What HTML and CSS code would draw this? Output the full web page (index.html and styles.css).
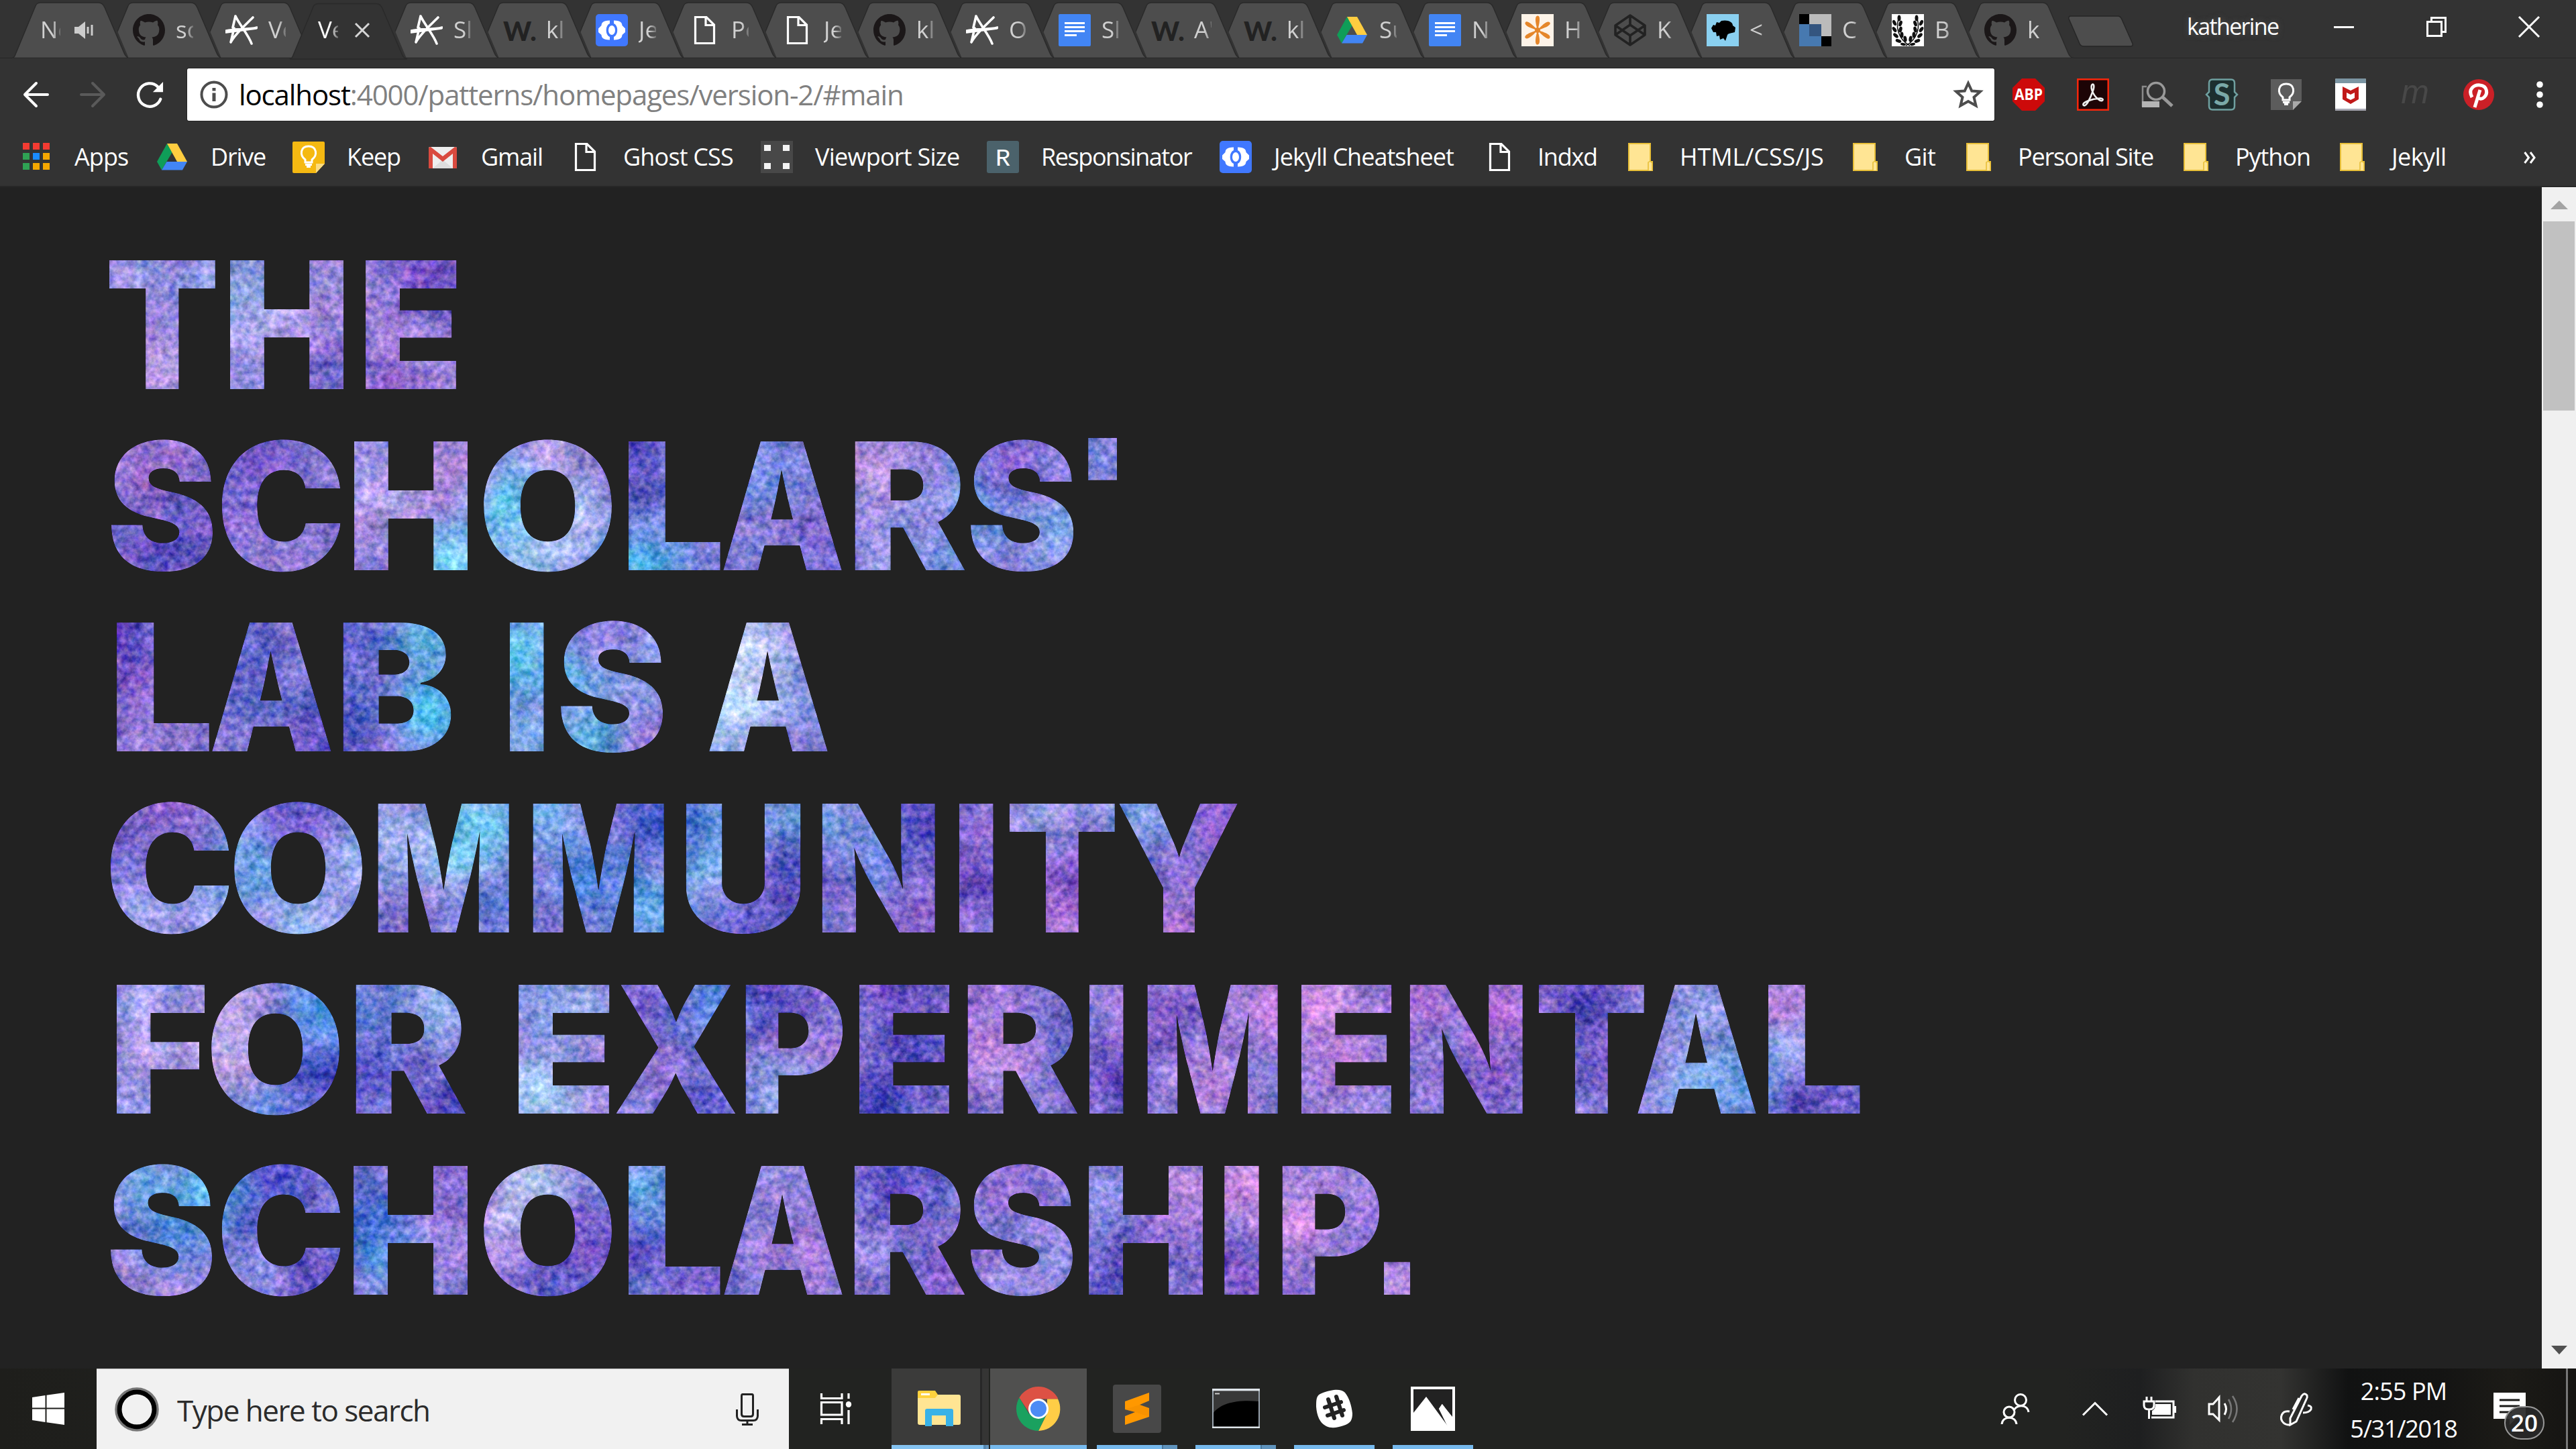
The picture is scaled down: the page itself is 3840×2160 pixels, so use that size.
FILE: index.html
```html
<!DOCTYPE html>
<html lang="en">
<head>
<meta charset="utf-8">
<title>Version 2</title>
<link rel="stylesheet" href="styles.css">
</head>
<body>
<svg class="defs" width="0" height="0" aria-hidden="true">
  <defs>
    <filter id="paper" x="0" y="0" width="100%" height="100%" color-interpolation-filters="sRGB">
      <feTurbulence type="fractalNoise" baseFrequency="0.1" numOctaves="4" seed="7" result="fine"/>
      <feColorMatrix in="fine" values="1 0 0 0 0  .7 .3 0 0 0  .5 0 .5 0 0  0 0 0 0 1" result="fineRgb"/>
      <feTurbulence type="fractalNoise" baseFrequency="0.022" numOctaves="3" seed="3" result="wide"/>
      <feColorMatrix in="wide" values="1 0 0 0 0  .6 .4 0 0 0  .7 .3 0 0 0  0 0 0 0 1" result="wideRgb"/>
      <feComposite in="SourceGraphic" in2="fineRgb" operator="arithmetic" k2="1" k3=".62" k4="-.3" result="a"/>
      <feComposite in="a" in2="wideRgb" operator="arithmetic" k2="1" k3=".4" k4="-.19" result="b"/>
      <feComposite in="b" in2="SourceAlpha" operator="in"/>
    </filter>
    <symbol id="tab" viewBox="0 0 180 84"><path d="M1 83.5C4 83 5 81 6 78L35 8Q37 1 43 1H130Q136 1 139 8L168 76Q171 83 176 83.5Z"/></symbol>
    <symbol id="github" viewBox="0 0 16 16"><path fill="#1b1718" d="M8 0C3.58 0 0 3.58 0 8c0 3.54 2.29 6.53 5.47 7.59.4.07.55-.17.55-.38 0-.19-.01-.82-.01-1.49-2.01.37-2.53-.49-2.69-.94-.09-.23-.48-.94-.82-1.13-.28-.15-.68-.52-.01-.53.63-.01 1.08.58 1.23.82.72 1.21 1.87.87 2.33.66.07-.52.28-.87.51-1.07-1.78-.2-3.64-.89-3.64-3.95 0-.87.31-1.59.82-2.15-.08-.2-.36-1.02.08-2.12 0 0 .67-.21 2.2.82.64-.18 1.32-.27 2-.27s1.36.09 2 .27c1.53-1.04 2.2-.82 2.2-.82.44 1.1.16 1.92.08 2.12.51.56.82 1.27.82 2.15 0 3.07-1.87 3.75-3.65 3.95.29.25.54.73.54 1.48 0 1.07-.01 1.93-.01 2.2 0 .21.15.46.55.38A8.01 8.01 0 0 0 16 8c0-4.42-3.58-8-8-8"/></symbol>
    <symbol id="star6" viewBox="0 0 48 48"><path fill="none" stroke="#fff" stroke-width="3.6" stroke-linecap="round" stroke-linejoin="round" d="M15 3L11 20M15 3C20 14 35 32 39 44M41 5C30 16 14 30 8 42L13 21M1 25C15 21 34 24 47 20M1 27L46 21"/></symbol>
    <symbol id="braces" viewBox="0 0 48 48"><rect width="48" height="48" rx="5" fill="#4078ff"/><path fill="#fff" d="M21 9.5C10 10 9 13 8.500 17L4 21.500V27L8.500 31C9 35 10 38 21 38.500V34C14 31 14 17 21 14zM27 9.500C38 10 39 13 39.500 17L44 21.500V27L39.500 31C39 35 38 38 27 38.500V34C34 31 34 17 27 14z"/><ellipse cx="24" cy="24" rx="5" ry="7" fill="#fff"/></symbol>
    <symbol id="page" viewBox="0 0 48 48"><path fill="none" stroke="#fff" stroke-width="3.200" d="M10.500 4.500H27L38.500 16V43.500H10.500zM26 4.500V16.500H38.500"/></symbol>
    <symbol id="docs" viewBox="0 0 48 48"><rect width="48" height="48" rx="2" fill="#4285f4"/><path stroke="#fff" stroke-width="3.200" d="M9 13.500H39M9 19.500H39M9 25.500H39M9 31.500H27"/></symbol>
    <symbol id="drive" viewBox="0 0 48 48"><path fill="#0f9d58" d="M16 4L1 31L8 43.500L24 16.500z"/><path fill="#ffcd40" d="M16 4H31L46 31H31z"/><path fill="#4285f4" d="M8 43.500L15.500 31H46L39 43.500z"/></symbol>
    <symbol id="folder" viewBox="0 0 48 48"><path fill="#ffe594" stroke="#e8bf38" stroke-width="2" d="M5 4H37V31H40V44H5z"/><path fill="#ffe594" stroke="#e8bf38" stroke-width="1.600" d="M34 44V32Q37 29 40 33V44"/></symbol>
    <symbol id="bulb" viewBox="0 0 48 48"><path fill="none" stroke-width="3" d="M19 32V28C10 21 12 8 24 8S38 21 29 28V32z"/><path stroke-width="3" d="M19 35.500H29M21 38.500H27"/></symbol>
  </defs>
</svg>

<header class="chrome">
  <div class="strip">
    <div class="tabs">
      <div class="tab noicon"><svg class="shape"><use href="#tab"/></svg><span class="t">Ne</span>
        <svg class="speaker" viewBox="0 0 30 28"><path fill="#ccc" d="M0 9H6L16 1V27L6 19H0zM18.500 9H21.500V19H18.500zM24.500 6H27.500V22H24.500z"/></svg></div>
      <div class="tab"><svg class="shape"><use href="#tab"/></svg><svg class="ico"><use href="#github"/></svg><span class="t">sc</span></div>
      <div class="tab"><svg class="shape"><use href="#tab"/></svg><svg class="ico"><use href="#star6"/></svg><span class="t">Ve</span></div>
      <div class="tab noicon active"><svg class="shape"><use href="#tab"/></svg><span class="t">Ve</span>
        <svg class="close" viewBox="0 0 22 22"><path stroke="#d6d6d6" stroke-width="3" d="M1 1L21 21M21 1L1 21"/></svg></div>
      <div class="tab"><svg class="shape"><use href="#tab"/></svg><svg class="ico"><use href="#star6"/></svg><span class="t">Sl</span></div>
      <div class="tab"><svg class="shape"><use href="#tab"/></svg><span class="ico w">W.</span><span class="t">kl</span></div>
      <div class="tab"><svg class="shape"><use href="#tab"/></svg><svg class="ico"><use href="#braces"/></svg><span class="t">Je</span></div>
      <div class="tab"><svg class="shape"><use href="#tab"/></svg><svg class="ico"><use href="#page"/></svg><span class="t">Pe</span></div>
      <div class="tab"><svg class="shape"><use href="#tab"/></svg><svg class="ico"><use href="#page"/></svg><span class="t">Je</span></div>
      <div class="tab"><svg class="shape"><use href="#tab"/></svg><svg class="ico"><use href="#github"/></svg><span class="t">kl</span></div>
      <div class="tab"><svg class="shape"><use href="#tab"/></svg><svg class="ico"><use href="#star6"/></svg><span class="t">O</span></div>
      <div class="tab"><svg class="shape"><use href="#tab"/></svg><svg class="ico"><use href="#docs"/></svg><span class="t">Sl</span></div>
      <div class="tab"><svg class="shape"><use href="#tab"/></svg><span class="ico w">W.</span><span class="t">A'</span></div>
      <div class="tab"><svg class="shape"><use href="#tab"/></svg><span class="ico w">W.</span><span class="t">kl</span></div>
      <div class="tab"><svg class="shape"><use href="#tab"/></svg><svg class="ico"><use href="#drive"/></svg><span class="t">Su</span></div>
      <div class="tab"><svg class="shape"><use href="#tab"/></svg><svg class="ico"><use href="#docs"/></svg><span class="t">N</span></div>
      <div class="tab"><svg class="shape"><use href="#tab"/></svg><svg class="ico" viewBox="0 0 48 48"><rect width="48" height="48" fill="#fdf3e8"/><g fill="#e5862a"><path id="petal" d="M24 24C21 14 19 3 24 2.500S27 14 24 24"/><use href="#petal" transform="rotate(58 24 24)"/><use href="#petal" transform="rotate(122 24 24)"/><use href="#petal" transform="rotate(180 24 24)"/><use href="#petal" transform="rotate(238 24 24)"/><use href="#petal" transform="rotate(302 24 24)"/><circle cx="24" cy="24" r="4"/></g></svg><span class="t">H</span></div>
      <div class="tab"><svg class="shape"><use href="#tab"/></svg><svg class="ico" viewBox="0 0 48 48"><path fill="none" stroke="#222" stroke-width="3.600" stroke-linejoin="round" d="M24 2L46 17V31L24 46L2 31V17zM24 2V16M24 32V46M2 17L24 32L46 17M2 31L24 16L46 31"/></svg><span class="t">K</span></div>
      <div class="tab"><svg class="shape"><use href="#tab"/></svg><svg class="ico" viewBox="0 0 48 48"><rect width="48" height="48" fill="#8ad0f0"/><path d="M7 21L10 16L13 17L15 12L19 13L22 10C32 8 39 12 39 17L43 20L42 27C36 29 33 28 31 31L28 40L25 36L20 38L19 32L15 33L14 27L10 27z"/></svg><span class="t">&lt;</span></div>
      <div class="tab"><svg class="shape"><use href="#tab"/></svg><svg class="ico" viewBox="0 0 48 48"><path d="M0 0H48V48H0z"/><path fill="#bbb" d="M15 0H48V33H15z"/><path fill="#4779b0" d="M0 15H33V48H0z"/><path fill="#34557f" d="M15 15H33V33H15z"/></svg><span class="t">C</span></div>
      <div class="tab"><svg class="shape"><use href="#tab"/></svg><svg class="ico" viewBox="0 0 48 48"><rect width="48" height="48" fill="#fff"/><g id="branch"><path fill="none" stroke="#111" stroke-width="1.500" d="M12 3C4 18 10 38 27 47"/><g fill="#111"><ellipse cx="11" cy="6" rx="2.500" ry="4.500"/><ellipse cx="4" cy="13" rx="2.500" ry="4.500" transform="rotate(-25 4 13)"/><ellipse cx="13" cy="14" rx="2.500" ry="4.500" transform="rotate(20 13 14)"/><ellipse cx="4" cy="23" rx="2.500" ry="4.500" transform="rotate(-35 4 23)"/><ellipse cx="13" cy="23" rx="2.500" ry="4.500" transform="rotate(15 13 23)"/><ellipse cx="6" cy="32" rx="2.500" ry="4.500" transform="rotate(-50 6 32)"/><ellipse cx="15" cy="31" rx="2.500" ry="4.500"/><ellipse cx="10" cy="40" rx="2.500" ry="4.500" transform="rotate(-70 10 40)"/><ellipse cx="20" cy="37" rx="2.500" ry="4.500" transform="rotate(-10 20 37)"/><ellipse cx="17" cy="45" rx="2" ry="4" transform="rotate(-80 17 45)"/></g></g><use href="#branch" transform="matrix(-1 0 0 1 48 0)"/></svg><span class="t">B</span></div>
      <div class="tab"><svg class="shape"><use href="#tab"/></svg><svg class="ico"><use href="#github"/></svg><span class="t">k</span></div>
    </div>
    <svg class="newtab" viewBox="0 0 100 50"><path fill="#4d4d4d" stroke="#262626" stroke-width="1.500" d="M5 2H75Q79 2 81 7L97 43Q98 47 94 47H24Q20 47 18 43L2 6Q1 2 5 2z"/></svg>
    <span class="user"><b class="fit" data-fit="135">katherine</b></span>
    <div class="wincontrols">
      <svg viewBox="0 0 32 32"><path stroke="#fff" stroke-width="3" d="M1 16.500H31"/></svg>
      <svg viewBox="0 0 32 32"><path fill="none" stroke="#fff" stroke-width="3" d="M2.500 8.500H23.500V29.500H2.500zM8.500 8V2.500H29.500V23.500H24"/></svg>
      <svg viewBox="0 0 32 32"><path stroke="#fff" stroke-width="3" d="M1 1L31 31M31 1L1 31"/></svg>
    </div>
  </div>

  <div class="toolbar">
    <svg class="nav" viewBox="0 0 40 40"><path fill="none" stroke="#fff" stroke-width="4" stroke-linecap="round" stroke-linejoin="round" d="M20 3L3 20L20 37M3 20H37"/></svg>
    <svg class="nav" viewBox="0 0 40 40"><path fill="none" stroke="#5a5a5a" stroke-width="4" stroke-linecap="round" stroke-linejoin="round" d="M20 3L37 20L20 37M37 20H3"/></svg>
    <svg class="nav reload" viewBox="0 0 44 44"><path fill="none" stroke="#fff" stroke-width="4.500" stroke-linecap="round" d="M38 29A18 18 0 1 1 33.500 9.500"/><path fill="#fff" d="M42 2V18H26z"/></svg>
    <div class="omnibox">
      <svg class="info" viewBox="0 0 42 42"><circle cx="21" cy="21" r="18.500" fill="none" stroke="#4d4d4d" stroke-width="4"/><path fill="#4d4d4d" d="M18.500 11H23.500V15.500H18.500zM18.500 18.500H23.500V31H18.500z"/></svg>
      <span class="url"><b class="fit" data-fit="986">localhost<i>:4000/patterns/homepages/version-2/#main</i></b></span>
      <svg class="fav" viewBox="0 0 46 46"><path fill="none" stroke="#4d4d4d" stroke-width="4" d="M23 6L28.300 17.500L41 18.500L31.500 27L34.500 39.500L23 33L11.500 39.500L14.500 27L5 18.500L17.700 17.500z"/></svg>
    </div>
    <div class="exts">
      <svg viewBox="0 0 48 48"><path fill="#cd0a0a" d="M14 0H34L48 14V34L34 48H14L0 34V14z"/><text x="24" y="32" text-anchor="middle" textLength="42" lengthAdjust="spacingAndGlyphs" class="abp">ABP</text></svg>
      <svg viewBox="0 0 48 48"><path fill="#1d0406" stroke="#f7270c" stroke-width="2.500" d="M1.300 1.300H46.700V46.700H1.300z"/><path fill="none" stroke="#eee" stroke-width="2.600" d="M10 40C6 36 22 30 35 29.500C42 30 38 36 32 31C26 27 20 16 22 10C24 6 27 10 24 18C21 27 14 43 10 40z"/></svg>
      <svg viewBox="0 0 48 48"><path fill="none" stroke="#8a8a8a" stroke-width="2.500" d="M8 12H2V42"/><path fill="#b5b5b5" d="M1 34H27V43H1z"/><circle cx="22" cy="19" r="12.500" fill="none" stroke="#999" stroke-width="3.500"/><path stroke="#999" stroke-width="5" d="M31 27L46 41"/></svg>
      <svg viewBox="0 0 48 48"><path fill="#1d2f2f" stroke="#6fa0a0" stroke-width="2.500" d="M10 1.500H38Q43 1.500 43 7V20L47 24L43 28V41Q43 46.500 38 46.500H10Q5 46.500 5 41V28L1 24L5 20V7Q5 1.500 10 1.500z"/><text x="24" y="40" text-anchor="middle" class="sty">S</text></svg>
      <svg viewBox="0 0 48 48"><path fill="#5c5c5c" d="M1 1H47V33L34 47H1z"/><path fill="#aaa" d="M34 47V34H47z"/><use href="#bulb" stroke="#fff"/></svg>
      <svg viewBox="0 0 48 48"><rect x="1" width="46" height="48" rx="2" fill="#fff"/><path fill="#7b95a3" d="M1 2Q1 0 3 0H45Q47 0 47 2V7H1z"/><path fill="#a9a9b4" d="M1 45H47V48H1z"/><path fill="#c01818" d="M12 12L24 18L36 12V31L24 38L12 31z"/><path fill="#fff" d="M18 21L24 24L30 21V29L24 32L18 29z"/></svg>
      <svg viewBox="0 0 48 48"><text x="24" y="37" text-anchor="middle" class="em">m</text></svg>
      <svg viewBox="0 0 48 48"><circle cx="23" cy="24" r="23" fill="#cb2027"/><path fill="none" stroke="#fff" stroke-width="5" d="M13 28C6 15 17 9 25 10C36 11 37 23 31 28C27 32 22 30 22 27M25 17L17 43"/></svg>
    </div>
    <svg class="dots" viewBox="0 0 12 42"><g fill="#fff"><circle cx="6" cy="6" r="4.800"/><circle cx="6" cy="21" r="4.800"/><circle cx="6" cy="36" r="4.800"/></g></svg>
  </div>

  <nav class="bookmarks">
    <a><svg viewBox="0 0 48 48"><path fill="#f33b32" d="M4 3h10v10H4zM19 3h10v10H19zM34 3h10v10H34z"/><path fill="#2fa254" d="M4 18h10v10H4zM4 33h10v10H4z"/><path fill="#1a8cff" d="M19 18h10v10H19z"/><path fill="#f5a700" d="M34 18h10v10H34zM19 33h10v10H19zM34 33h10v10H34z"/></svg><b class="fit" data-fit="80">Apps</b></a>
    <a><svg><use href="#drive"/></svg><b class="fit" data-fit="79">Drive</b></a>
    <a><svg viewBox="0 0 48 48"><path fill="#f5b912" d="M2 1H46Q48 1 48 3V34L35 48H2Q0 48 0 46V3Q0 1 2 1"/><path fill="#fbdc82" d="M35 48V34H48z"/><use href="#bulb" stroke="#fff"/></svg><b class="fit" data-fit="77">Keep</b></a>
    <a><svg viewBox="0 0 48 48"><rect x="3" y="9" width="42" height="32" rx="2" fill="#eee"/><path fill="#ddd" d="M9 41L24 28L39 41z"/><path fill="#d94a3f" d="M3 41V11Q3 9 6 9L24 23L42 9Q45 9 45 11V41H39V19L24 31L9 19V41z"/></svg><b class="fit" data-fit="89">Gmail</b></a>
    <a><svg><use href="#page"/></svg><b class="fit" data-fit="162">Ghost CSS</b></a>
    <a><svg viewBox="0 0 48 48"><rect width="48" height="48" fill="#484848"/><path fill="#f4f4f4" d="M5 6h10v9H5zM33 6h10v9H33zM5 33h10v9H5zM33 33h10v9H33z"/></svg><b class="fit" data-fit="215">Viewport Size</b></a>
    <a><svg viewBox="0 0 48 48"><rect width="48" height="48" rx="3" fill="#4b626b"/><text x="24" y="37" text-anchor="middle" class="resp">R</text></svg><b class="fit" data-fit="223">Responsinator</b></a>
    <a><svg><use href="#braces"/></svg><b class="fit" data-fit="271">Jekyll Cheatsheet</b></a>
    <a><svg><use href="#page"/></svg><b class="fit" data-fit="84">Indxd</b></a>
    <a><svg><use href="#folder"/></svg><b class="fit" data-fit="211">HTML/CSS/JS</b></a>
    <a><svg><use href="#folder"/></svg><b class="fit" data-fit="44">Git</b></a>
    <a><svg><use href="#folder"/></svg><b class="fit" data-fit="199">Personal Site</b></a>
    <a><svg><use href="#folder"/></svg><b class="fit" data-fit="108">Python</b></a>
    <a><svg><use href="#folder"/></svg><b class="fit" data-fit="83">Jekyll</b></a>
    <svg class="more" viewBox="0 0 18 18"><path fill="none" stroke="#fff" stroke-width="3" d="M1.500 1L7.500 9L1.500 17M10 1L16 9L10 17"/></svg>
  </nav>
</header>

<main class="view">
  <h1 class="lead">
    <span data-ink="160-324 343-512 545-682">THE</span>
    <span data-ink="163-318 330-508 528-697 720-914 937-1076 1077-1257 1275-1439 1444-1601 1622-1665">SCHOLARS'</span>
    <span data-ink="174-314 315-496 512-676 - 760-812 833-989 - 1056-1236">LAB IS A</span>
    <span data-ink="164-342 348-542 564-762 795-993 1023-1197 1226-1397 1430-1482 1502-1665 1667-1848">COMMUNITY</span>
    <span data-ink="174-306 314-508 531-695 - 773-910 917-1097 1112-1259 1281-1417 1442-1606 1624-1676 1710-1907 1940-2076 2101-2272 2291-2454 2439-2619 2636-2775">FOR EXPERIMENTAL</span>
    <span data-ink="162-317 330-508 527-697 720-914 937-1076 1078-1258 1274-1439 1444-1600 1623-1793 1825-1878 1912-2059 2061-2103">SCHOLARSHIP.</span>
  </h1>
  <div class="scroll">
    <svg viewBox="0 0 26 14"><path fill="#a3a3a3" d="M13 0L26 13H0z"/></svg>
    <div class="thumb"></div>
    <svg viewBox="0 0 26 14"><path fill="#505050" d="M1 0H25L13 13z"/></svg>
  </div>
</main>

<footer class="taskbar">
  <div class="start"><svg viewBox="0 0 48 48"><path fill="#fff" d="M0 7L19.500 4V22.500H0zM21.500 3.700L48 0V22.500H21.500zM0 24.500H19.500V44L0 41zM21.500 24.500H48V48L21.500 44.300z"/></svg></div>
  <div class="search">
    <svg class="ring" viewBox="0 0 66 66"><circle cx="33" cy="33" r="31" fill="none" stroke="#777" stroke-width="3.500"/><circle cx="33" cy="33" r="26" fill="none" stroke="#000" stroke-width="7"/></svg>
    <span class="hint"><b class="fit" data-fit="375">Type here to search</b></span>
    <svg class="mic" viewBox="0 0 34 48"><path fill="none" stroke="#222" stroke-width="3" d="M10 1.500H24Q25.500 1.500 25.500 4V31Q25.500 34.500 22 34.500H12Q8.500 34.500 8.500 31V4Q8.500 1.500 10 1.500M1.500 24V34Q2 40.500 8 40.500H26Q32 40.500 32.500 34V24M17 41V47M9 46.500H25"/></svg>
  </div>
  <div class="apps">
    <div class="app view-btn"><svg viewBox="0 0 46 46"><path fill="none" stroke="#fff" stroke-width="3.200" d="M1.500 0V7.500H32V0M1.500 13.500H32V32H1.500zM1.500 46V38.500H32V46M42 0V8M42 25V46"/><ellipse cx="42" cy="16.500" rx="4.200" ry="4.500" fill="#fff"/></svg></div>
    <div class="app explorer"><svg viewBox="0 0 66 56"><path fill="#ffd23e" d="M1 3Q1 1 3 1H27L31 7V12H1z"/><path fill="#fff" d="M6 5H19V8H6z"/><path fill="#ffe593" d="M1 12H27L31 7H62Q65 7 65 10V49Q65 52 62 52H4Q1 52 1 49z"/><path fill="#39b2e7" d="M12 31Q12 28 15 28H51Q54 28 54 31V54H43V38H22V54H12z"/></svg></div>
    <div class="app current"><svg viewBox="0 0 66 66"><path fill="#dd5144" d="M4.400 16.500A33 33 0 0 1 61.600 16.500L62 18.500H33L20 40z"/><path fill="#ffcd46" d="M62 18.500A33 33 0 0 1 33 66L46 40L46 18.500z"/><path fill="#1aa15f" d="M4.400 16.500A33 33 0 0 0 33 66L45 41L33 33L19 41z"/><circle cx="33" cy="33" r="15" fill="#fff"/><circle cx="33" cy="33" r="12" fill="#4c8bf5"/></svg></div>
    <div class="app stacked"><svg class="tile" viewBox="0 0 72 72"><rect width="72" height="72" rx="4" fill="#484848"/><path fill="#ff9800" d="M18 25L54 12V24L40 30L54 35V48L18 60V47L33 41L18 37z"/><path fill="#e08000" d="M33 41L54 48L54 36L40 30L18 37z" opacity=".25"/></svg></div>
    <div class="app stacked"><svg class="tile" viewBox="0 0 72 72"><path d="M2 7H71V64H2z" stroke="#9aa4ae" stroke-width="2"/><path fill="#383838" d="M3 10H70V25C40 22 14 27 3 42z"/><path fill="#dfe5ea" d="M1 6H72V9.500H1zM1 62.500H72V65H1z"/><path stroke="#ccc" stroke-width="2" d="M5 13.500H12"/></svg></div>
    <div class="app"><svg class="tile" viewBox="0 0 72 72"><path fill="#fff" d="M30 9C39 7 47 7 52 12C58 19 62 32 63 43C63 53 60 58 50 61C41 64 32 66 24 62C14 57 10 46 9 33C9 22 9 16 17 13C21 11 25 10 30 9"/><path stroke="#232323" stroke-width="6" stroke-linecap="round" d="M27 22L36 50M39 18L48 46M22 34L46 26M26 46L50 38"/></svg></div>
    <div class="app"><svg viewBox="0 0 66 66"><path fill="#fff" d="M0 0H66V66H0z"/><path fill="#222" d="M4 4H62V46L47 26L42 33L56 60L23 15L4 39z"/><path fill="#fff" d="M42 33L46.500 26L62 45V62H56z"/></svg></div>
  </div>
  <div class="tray">
    <svg class="people" viewBox="0 0 44 48"><g fill="none" stroke="#fff" stroke-width="3"><circle cx="30" cy="11" r="8.500"/><circle cx="13" cy="29" r="8"/><path d="M20 27C22 18 40 16 42 29M2 47C3 34 23 34 24 47"/></g></svg>
    <svg class="up" viewBox="0 0 38 22"><path fill="none" stroke="#fff" stroke-width="3" d="M1 20.500L19 2.500L37 20.500"/></svg>
    <svg class="power" viewBox="0 0 50 36"><path fill="none" stroke="#fff" stroke-width="3" d="M18 8H45V32H12M5 1V8M12 1V8M1 8H16V14Q16 20 8.500 20T1 14zM8.500 20V34"/><path fill="#fff" d="M18 12H41V28H13V22Q18 20 18 12M46 15H49V25H46z"/></svg>
    <svg class="vol" viewBox="0 0 50 44"><path fill="none" stroke="#fff" stroke-width="3" d="M2 15H8L17 5V39L8 30H2zM25 14Q30 22 25 31"/><path fill="none" stroke="#777" stroke-width="2.600" d="M31 8Q39 22 31 37M37 3Q50 22 37 42"/></svg>
    <svg class="pen" viewBox="0 0 50 50"><path fill="none" stroke="#fff" stroke-width="3" d="M33 5Q37 -1 41 4Q42 7 40 10L25 43L16 48V38L33 5M29 8L20 25M15 28C3 26 -1 38 6 45Q9 48 15 48M42 19Q49 20 47 25Q44 30 35 30"/></svg>
    <div class="clock"><b class="fit" data-fit="125">2:55 PM</b><b class="fit" data-fit="157">5/31/2018</b></div>
    <div class="note"><svg viewBox="0 0 48 48"><path fill="#fff" d="M0 0H48V39H33L24 48V39H0z"/><path stroke="#1a1a18" stroke-width="3" d="M9 11H39M9 20H39M9 29H27"/></svg><span class="badge">20</span></div>
  </div>
</footer>
<script src="page.js"></script>
</body>
</html>
```
FILE: styles.css
```css
* { box-sizing: border-box; }
body {
  margin: 0;
  width: 3840px;
  height: 2160px;
  overflow: hidden;
  display: flex;
  flex-direction: column;
  background: #222;
  color: #fff;
  font: 36px/1 "Open Sans", "Noto Sans", sans-serif;
}
svg { display: block; flex: none; overflow: visible; }
b { font-weight: 400; white-space: pre; }
i { font-style: normal; }
.defs { position: absolute; }

.chrome {
  height: 279px;
  background: #333;
  border-bottom: 2px solid #272727;
  flex: none;
}
.strip {
  height: 87px;
  display: flex;
  padding-left: 17px;
  border-bottom: 1px solid #262626;
}
.tabs { display: flex; height: 86px; padding-top: 3px; }
.tab {
  position: relative;
  width: 138px;
  height: 84px;
  padding: 18px 0 0 43px;
  display: flex;
  flex: none;
  color: #d0d0d0;
}
.tab .shape {
  position: absolute;
  left: 0;
  top: 0;
  width: 180px;
  height: 84px;
  fill: #4d4d4d;
  stroke: #2a2a2a;
  stroke-width: 1.5;
}
.tab:nth-child(n+2) .shape { clip-path: polygon(19px 41px, 36px 0, 180px 0, 180px 84px, 37px 84px); }
.tab:nth-child(4) .shape { clip-path: none; }
.tab.active { z-index: 1; color: #fff; }
.tab.active .shape { fill: #333; height: 87px; }
.ico { position: relative; width: 48px; height: 48px; flex: none; margin-right: 16px; }
.w { color: #222; font: 900 40px/50px "Lato", sans-serif; }
.t {
  position: relative;
  width: 26px;
  flex: none;
  overflow: hidden;
  white-space: nowrap;
  font-size: 35px;
  line-height: 46px;
  -webkit-mask-image: linear-gradient(90deg, #000 60%, rgba(0, 0, 0, .25) 100%);
  mask-image: linear-gradient(90deg, #000 60%, rgba(0, 0, 0, .25) 100%);
}
.noicon .t { width: 30px; }
.speaker { position: relative; width: 30px; height: 28px; margin: 10px 0 0 21px; }
.close { position: relative; width: 22px; height: 22px; margin: 13px 0 0 25px; }
.newtab { width: 100px; height: 50px; margin: 22px 0 0 29px; }
.user { margin: 19px 0 0 78px; width: 135px; font-size: 34px; line-height: 40px; text-shadow: 0 0 8px #555; }
.wincontrols { display: flex; gap: 106px; margin: 24px 0 0 83px; }
.wincontrols svg { width: 32px; height: 32px; }

.toolbar { height: 108px; display: flex; align-items: center; padding: 0 0 0 34px; }
.nav { width: 40px; height: 40px; margin-right: 44px; margin-bottom: 1px; }
.reload { width: 42px; height: 42px; margin-right: 34px; margin-left: 1px; }
.omnibox {
  width: 2694px;
  height: 78px;
  background: #fff;
  border-radius: 2px;
  outline: 1px solid #232323;
  display: flex;
  align-items: center;
  padding: 0 16px 0 19px;
  color: #000;
}
.info { width: 42px; height: 42px; }
.url { flex: 1; font-size: 42px; padding-left: 16px; line-height: 56px; }
.url i { color: #808080; }
.fav { width: 46px; height: 46px; }
.exts { display: flex; gap: 48px; margin-left: 27px; }
.exts svg { width: 48px; height: 48px; }
.abp { font: 700 23px "Open Sans", sans-serif; fill: #fff; }
.sty { font: 700 45px "Lato", sans-serif; fill: #7aa9a8; }
.em { font: italic 50px "Liberation Sans", sans-serif; fill: #484848; }
.resp { font: 37px "Liberation Mono", monospace; fill: #fff; }
.dots { width: 12px; height: 42px; margin-left: 60px; }

.bookmarks {
  height: 78px;
  display: grid;
  align-items: center;
  padding-left: 30px;
  grid-template-columns: 203px 203px 200px 212px 286px 337px 347px 393px 212px 335px 169px 324px 233px 278px auto;
}
.bookmarks a { display: flex; align-items: center; gap: 33px; line-height: 50px; }
.bookmarks a svg { width: 48px; height: 48px; }
.bookmarks .more { width: 18px; height: 18px; margin-top: 2px; }

.view { height: 1761px; flex: none; display: flex; justify-content: space-between; background: #222; }
/* White letters on black, tinted by the wash, then lightened onto the page. */
.lead {
  position: relative;
  margin: 70px 0 0 152px;
  width: 2700px;
  height: 1630px;
  font: 900 264px/270px "Inter", sans-serif;
  background: #000;
  isolation: isolate;
  mix-blend-mode: lighten;
  white-space: nowrap;
  font-kerning: none;
}
.lead::after {
  content: "";
  position: absolute;
  inset: 0;
  background: var(--washes) #7f72cc;
  filter: url(#paper);
  mix-blend-mode: multiply;
}
.lead > span { display: block; white-space: pre; height: 270px; }
.lead span span { display: inline-block; transform-origin: 0 50%; }
.lead .mark { font: 700 258px/0 "DejaVu Sans", sans-serif; }
.lead .tick { font: 700 232px/0 "DejaVu Sans", sans-serif; vertical-align: 28px; }
.scroll {
  width: 51px;
  background: #f0f0f0;
  display: flex;
  flex-direction: column;
  align-items: center;
  padding: 20px 0;
}
.scroll svg { width: 26px; height: 14px; }
.thumb { width: 47px; height: 282px; margin: 17px 0 auto; background: #c1c1c1; }

.taskbar {
  height: 120px;
  flex: none;
  display: flex;
  background: linear-gradient(90deg, #1e1e1b 0, #222321 600px, #222321 3080px, #1e1f20 3190px, #31312f 3270px, #333331 3400px, #111212 3500px, #141413 3640px, #1c1b17 3740px, #151412 3840px);
}
.start { width: 144px; padding: 36px 48px; }
.start svg { width: 48px; height: 48px; }
.search {
  width: 1032px;
  background: #f1f1f1;
  border-top: 1px solid #bbb;
  color: #2b2b2b;
  display: flex;
  align-items: center;
  padding: 0 45px 0 27px;
}
.ring { width: 66px; height: 66px; }
.hint { flex: 1; padding-left: 27px; font-size: 44px; line-height: 58px; padding-top: 3px; }
.mic { width: 34px; height: 48px; }
.apps { display: flex; gap: 27px; }
.app {
  width: 120px;
  height: 120px;
  border-bottom: 6px solid #76b9ed;
  display: grid;
  place-items: center;
  padding-top: 6px;
}
.app svg { width: 66px; height: 66px; }
.app svg.tile { width: 72px; height: 72px; }
.view-btn { border: 0; width: 126px; padding: 0 0 0 14px; }
.view-btn svg { width: 46px; height: 46px; }
.explorer {
  width: 145px;
  padding-right: 3px;
  background: linear-gradient(90deg, #3b3b3a 132px, #272727 132px 135px, #353534 135px);
  border-image: linear-gradient(90deg, #85c3f1 132px, #5688b0 132px 135px, #6496bf 135px) 6;
}
.app.explorer { border-width: 0 0 6px; border-style: solid; }
.explorer svg { height: 56px; }
.current { width: 144px; margin-left: -25px; margin-right: -12px; background: #50504f; }
.stacked { border-image: linear-gradient(90deg, #76b9ed 93px, #4a769a 93px 95px, #5f93bd 95px) 6; }
.app.stacked { border-width: 0 0 6px; border-style: solid; }

.tray { display: flex; margin-left: auto; padding-top: 36px; }
.people { width: 44px; height: 48px; }
.up { width: 38px; height: 22px; margin: 13px 0 0 78px; }
.power { width: 50px; height: 36px; margin: 5px 0 0 53px; }
.vol { width: 50px; height: 44px; margin: 2px 0 0 46px; }
.pen { width: 50px; height: 50px; margin-left: 57px; }
.clock {
  width: 160px;
  margin: -30px 0 0 55px;
  display: flex;
  flex-direction: column;
  align-items: center;
  line-height: 56px;
}
.note { position: relative; width: 111px; margin-left: 54px; margin-top: -36px; margin-right: 12px; padding-top: 36px; border-right: 3px solid #777; }
.note svg { width: 48px; height: 48px; }
.badge {
  position: absolute;
  left: 16px;
  top: 56px;
  width: 60px;
  height: 50px;
  border: 2px solid #999;
  border-radius: 25px;
  background: rgba(40, 40, 40, .93);
  text-align: center;
  font-weight: 600;
  font-size: 35px;
  line-height: 45px;
}
```
FILE: page.js
```javascript
const pen = document.createElement('canvas').getContext('2d');
const measure = (el, text) => {
  const s = getComputedStyle(el);
  pen.font = `${s.fontWeight} ${s.fontSize} ${s.fontFamily}`;
  return pen.measureText(text);
};

// Track labels so the drawn letters span exactly data-fit pixels.
for (const el of document.querySelectorAll('.fit')) {
  const text = el.textContent;
  const m = measure(el, text);
  const ink = m.actualBoundingBoxLeft + m.actualBoundingBoxRight;
  el.style.letterSpacing = (el.dataset.fit - ink) / (text.length - 1) + 'px';
}

// Kern the headline: data-ink lists the left and right edge of each letter.
const lead = document.querySelector('.lead');
const special = { '.': 'mark', "'": 'tick' };
for (const line of lead.children) {
  const ink = line.dataset.ink.split(' ').map(p => p.split('-').map(Number));
  const chars = [...line.textContent];
  line.textContent = '';
  let x = 152;
  chars.forEach((c, i) => {
    const [left, right] = ink[i];
    if (!left) { line.append(c); x += measure(lead, c).width; return; }
    const el = document.createElement('span');
    el.className = special[c] || '';
    el.textContent = c;
    line.append(el);
    const m = measure(el, c);
    const scale = (right - left) / (m.actualBoundingBoxLeft + m.actualBoundingBoxRight);
    const start = left + m.actualBoundingBoxLeft * scale;
    el.style.transform = `scaleX(${scale.toFixed(3)})`;
    el.style.marginLeft = (start - x).toFixed(1) + 'px';
    x = start + m.width;
  });
}

// Watercolour washes behind the headline: x y colour.
const washes = `60 60 8f8ed8,95 200 b59ae0,200 80 7fa5dc,250 130 b4a0e4,350 90 a08ad8,200 220 8f8fe0,330 200 8068cc,480 60 6a48bc,440 150 a083d8,420 210 7e4fc0,500 225 9f84d8,
60 350 9a68c8,40 400 6a64c8,90 470 5a44b8,130 420 6a5cc0,230 330 6a50c0,200 400 7c60c8,260 490 8c78d0,400 340 9a90e0,520 350 b088d8,430 400 b8a0e0,520 490 70d0f0,600 400 60c8ec,680 330 b0a0e4,700 420 a8c0f0,640 480 a0c8f4,800 330 5048b8,810 400 6870cc,800 480 3cacdf,880 480 6878d0,990 350 6080d4,960 430 8c80d8,1080 480 6c60c8,1150 350 b494dc,1200 400 8c8cdc,1150 480 a0a8ec,1260 480 7090dc,1350 340 7a60cc,1300 400 60a0e0,1420 440 80a0e4,1480 330 7c80d8,
30 600 4c38b0,40 680 8060c8,60 750 9878d0,200 620 5058c0,230 680 5a64c4,330 750 5548b8,370 600 5058c0,480 600 60b0e0,370 720 5060c4,490 710 40b8e4,625 620 60c0e8,630 750 78a8e4,620 670 5080cc,740 590 8078d4,700 650 70b0e8,800 650 88a0e4,720 750 60b4e4,970 620 b8d0f4,950 690 c0d8f8,1040 700 8090dc,920 750 88b0ec,
100 860 8860c8,30 920 7468cc,60 1010 98a8ec,170 1020 88a0e4,290 860 6858c8,220 940 60a0e0,380 930 90a8e8,300 1030 90b8ec,430 900 a0b0ec,560 880 68c4ec,520 920 98d0f4,590 1010 5878d0,660 870 68a8e4,730 960 4480d8,830 870 4058c8,820 1010 58a0e0,880 870 5090d8,900 940 80b0ec,1030 960 5048b8,950 1030 5850c0,1030 870 70a0e0,1100 880 8090dc,1150 920 5070cc,1220 880 4840b4,1230 1010 8860c8,1300 880 8468cc,1300 960 6848bc,1400 860 98a0e4,1440 950 7850c0,1430 1000 a868c8,1540 870 80a0e4,1580 930 8068cc,1670 870 7850c0,1610 1030 a068c8,
60 1140 a0a0e8,80 1220 b0a0e4,40 1300 8890e0,190 1150 b4a4e4,190 1230 c0a8e4,320 1160 5090e0,330 1250 4048bc,250 1310 6080d8,400 1160 6078d0,500 1150 88b0e8,400 1240 4c50c0,520 1300 5048b8,640 1140 7c90dc,700 1150 a0b8ec,650 1280 a0c8f0,700 1300 9890dc,800 1140 6c58c4,900 1150 4c80d8,850 1220 8c70d0,900 1290 5050c0,990 1140 5040b4,1080 1150 8070d0,1000 1280 90a0e4,1070 1220 9478d0,1180 1140 5a40b4,1160 1290 4038b0,1220 1220 5044b8,1320 1140 9068c8,1330 1220 c088dc,1430 1200 6c68c8,1490 1150 9878d4,1500 1250 5c40b4,1590 1160 8058c4,1720 1150 b078d4,1650 1260 b080d8,1820 1140 c888dc,1850 1220 b478d4,1840 1300 9478d0,1960 1140 a068cc,2090 1160 a060c8,2060 1260 8058c4,2210 1130 5440b4,2240 1230 7058c4,2300 1150 8078d0,2370 1170 88a0e0,2380 1260 78a8e4,2440 1270 5890dc,2320 1280 9080d8,2510 1140 b080d8,2510 1200 90b0ec,2530 1270 5c48b8,2610 1290 6060c8,
60 1410 70a0e0,150 1420 58b0e4,100 1480 3c80d0,60 1560 a088d8,140 1550 8880d8,260 1400 4048c0,230 1460 6060c8,200 1520 8090e0,320 1560 5c48b8,400 1470 3c68cc,410 1520 60a0e0,520 1420 8060c8,500 1500 9080d8,640 1400 b8c8f0,590 1460 c0b0ec,730 1500 6a50c0,680 1560 6058c4,590 1520 9070d0,800 1420 60a0e0,810 1500 4c50c0,890 1560 7060c8,1000 1400 9088dc,1040 1500 a078d4,1190 1420 4c40b8,1150 1480 8c80d8,1250 1550 7058c4,1370 1410 9070d4,1400 1540 9088dc,1300 1570 a888dc,1480 1430 8088dc,1500 1560 5c50c0,1610 1420 b888dc,1560 1480 7c60c8,1700 1410 cc88dc,1690 1550 7850c0,1780 1480 c088dc,1830 1410 a080d8,1900 1480 8468cc,1800 1570 8c70d0,1920 1560 b48cdc`;
lead.style.setProperty('--washes', washes.split(',').map(w => {
  const [x, y, c] = w.trim().split(' ');
  return `radial-gradient(circle at ${x}px ${y}px, #${c} 8px, transparent 90px)`;
}).join(','));
```
